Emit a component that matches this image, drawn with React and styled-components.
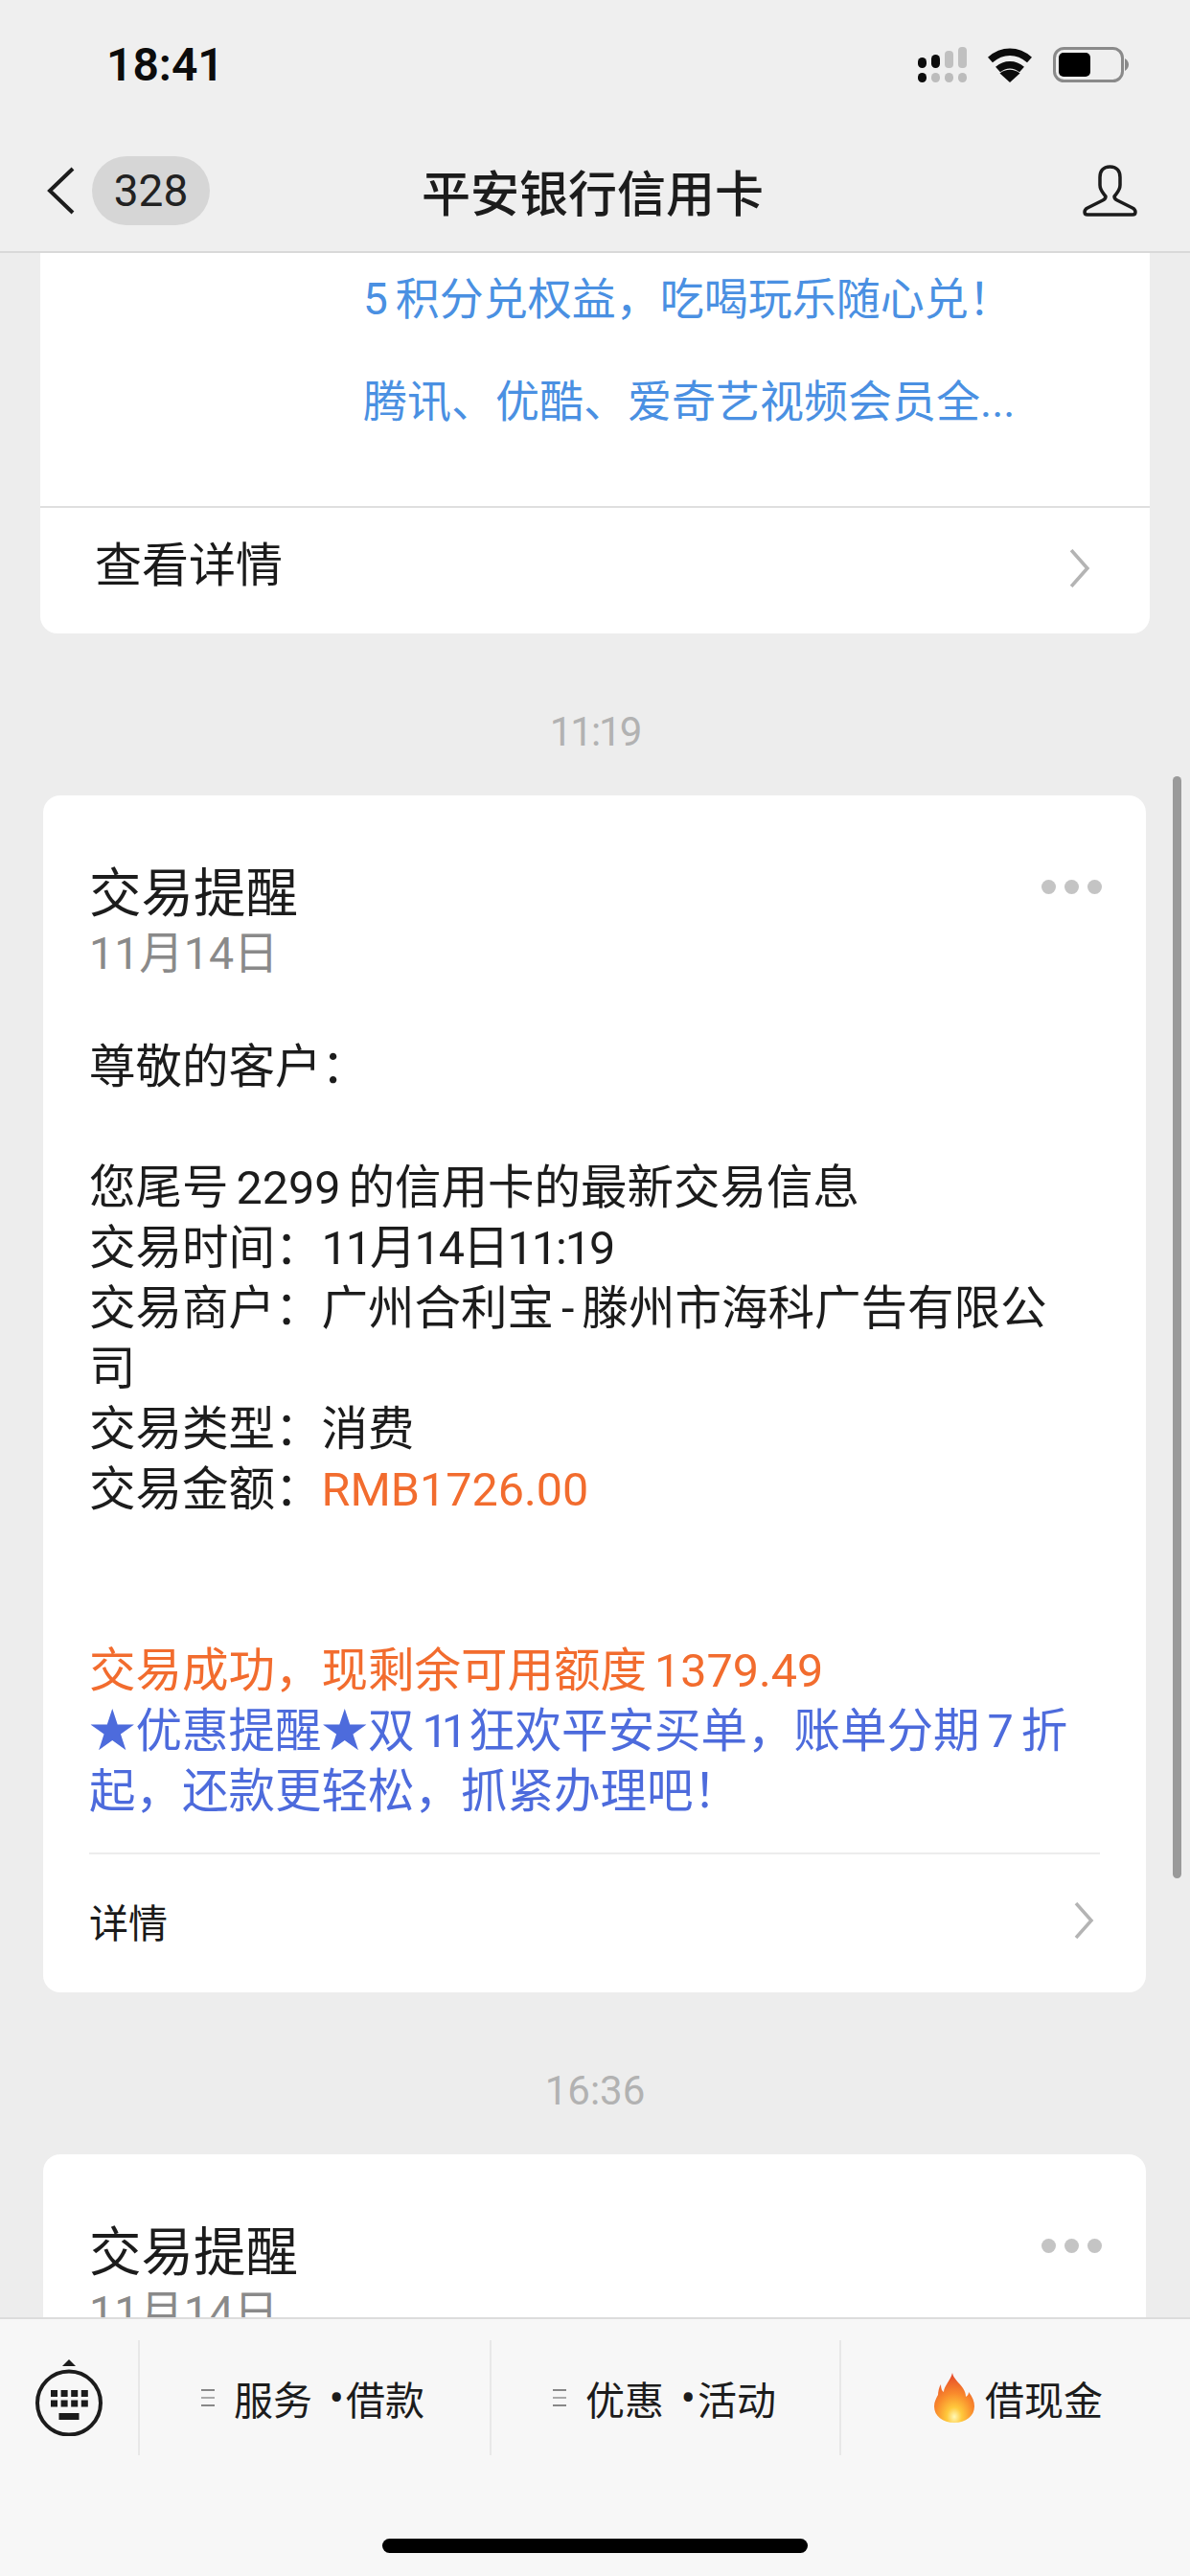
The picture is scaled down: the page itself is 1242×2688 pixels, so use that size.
import React from 'react';
import styled, { createGlobalStyle } from 'styled-components';

const GlobalStyle = createGlobalStyle`
  html, body { margin: 0; padding: 0; background: #ededed; }
  * { box-sizing: border-box; }
`;

// full-width punctuation, kept as escapes so it can't get swapped for the ascii ones
const COLON = '\uFF1A';
const COMMA = '\uFF0C';
const BANG = '\uFF01';

const Page = styled.div`
  width: 1242px;
  height: 2688px;
  display: flex;
  flex-direction: column;
  overflow: hidden;
  position: relative;
  background: #ededed;
  font-family: Roboto, "Noto Sans CJK SC", sans-serif;
  color: #1a1a1a;
`;
const Header = styled.header`
  height: 264px;
  flex: none;
  background: #efefef;
  border-bottom: 2px solid #d9d9d9;
`;
const StatusBar = styled.div`
  height: 135px;
  display: flex;
  align-items: flex-start;
  justify-content: space-between;
  padding: 49px 64px 0 111px;
`;
const Clock = styled.div`
  font-size: 48px;
  font-weight: 600;
  line-height: 38px;
  color: #0c0c0c;
`;
const StatusIcons = styled.div`
  display: flex;
  gap: 21px;
  align-items: center;
`;
const NavBar = styled.div`
  height: 127px;
  display: grid;
  grid-template-columns: 1fr auto 1fr;
  align-items: center;
  padding: 0 54px 0 49px;
`;
const NavLeft = styled.div`
  display: flex;
  align-items: center;
`;
const NavRight = styled.div`
  display: flex;
  justify-content: flex-end;
`;
const Badge = styled.div`
  width: 123px;
  height: 72px;
  margin-left: 18px;
  border-radius: 36px;
  background: #d6d6d6;
  font-size: 46px;
  line-height: 72px;
  text-align: center;
  color: #222;
`;
const NavTitle = styled.div`
  font-size: 51px;
  font-weight: 500;
  color: #1c1c1c;
`;
const Scroll = styled.main`
  flex: 1;
  min-height: 0;
  overflow: hidden;
`;
const PromoCard = styled.section`
  margin: 0 42px;
  height: 397px;
  background: #fff;
  border-radius: 0 0 18px 18px;
  display: flex;
  flex-direction: column;
`;
const PromoBody = styled.div`
  height: 266px;
  padding: 0 0 0 337px;
  border-bottom: 2px solid #dfdfdf;
`;
const PromoLine = styled.div`
  font-size: 46px;
  line-height: 107px;
  height: 107px;
  color: #4a90e2;
  white-space: nowrap;
  &:first-child { margin-top: -5px; }
`;
const PromoFoot = styled.div`
  flex: 1;
  display: flex;
  align-items: center;
  justify-content: space-between;
  padding: 0 62px 6px 57px;
  font-size: 49px;
  line-height: 60px;
`;
const FootLabel = styled.span`
  margin-top: -4px;
`;
const TimeStamp = styled.div`
  height: 169px;
  display: flex;
  align-items: center;
  justify-content: center;
  font-size: 42px;
  color: #b2b2b2;
  padding-top: 36px;
`;
const Card = styled.article`
  margin: 0 46px 0 45px;
  background: #fff;
  border-radius: 18px;
  padding: 71px 48px 0 48px;
  position: relative;
`;
const CardTitle = styled.div`
  font-size: 54.5px;
  line-height: 63px;
  color: #1c1c1c;
`;
const CardDate = styled.div`
  font-size: 46.5px;
  line-height: 63px;
  color: #8a8a8a;
`;
const Dots = styled.div`
  position: absolute;
  top: 88px;
  right: 46px;
  display: flex;
  gap: 9px;
`;
const Dot = styled.i`
  width: 15px;
  height: 15px;
  border-radius: 50%;
  background: #c4c4c4;
`;
const Body = styled.div`
  margin-top: 55px;
`;
const Line = styled.div`
  font-size: 48.5px;
  line-height: 63px;
  min-height: 63px;
  white-space: nowrap;
  color: ${p => p.$color || '#1c1c1c'};
`;
const Amount = styled.span`
  color: #f26c2e;
`;
const Gap = styled.span`
  display: inline-block;
  width: 8px;
`;
const Tight = styled.span`
  letter-spacing: ${p => p.$by}px;
`;
const CardFoot = styled.div`
  margin-top: 32px;
  height: 146px;
  border-top: 2px solid #ececec;
  display: flex;
  align-items: center;
  justify-content: space-between;
  font-size: 41px;
  padding: 0 6px 6px 0;
`;
const ScrollThumb = styled.div`
  position: absolute;
  top: 810px;
  left: 1224px;
  width: 9px;
  height: 1150px;
  border-radius: 5px;
  background: #9a9a9a;
`;
const BottomBar = styled.footer`
  height: 270px;
  flex: none;
  background: #f7f7f7;
  border-top: 2px solid #dcdcdc;
  display: flex;
  flex-direction: column;
`;
const Menu = styled.div`
  display: flex;
  margin-top: 22px;
  height: 120px;
`;
const KeyboardSlot = styled.div`
  width: 144px;
  flex: none;
  display: flex;
  align-items: flex-start;
  justify-content: center;
  padding: 20px 0 0;
`;
const MenuItem = styled.div`
  flex: none;
  width: ${p => p.$w}px;
  border-left: 2px solid #e8e8e8;
  display: flex;
  align-items: center;
  justify-content: center;
  font-size: 41px;
  color: #1c1c1c;
  padding-left: ${p => p.$pad || 0}px;
  padding-right: ${p => p.$padRight || 0}px;
`;
const GlyphBox = styled.span`
  display: flex;
  margin-right: ${p => p.$gap}px;
`;
const Bullet = styled.span`
  width: 35px;
  text-align: right;
  padding-right: 2px;
  font-size: 46px;
  line-height: 40px;
`;
const HomeIndicator = styled.div`
  width: 444px;
  height: 15px;
  border-radius: 8px;
  background: #000;
  margin: 87px auto 0;
`;

const Signal = () => (
  <svg width="51" height="37" viewBox="0 0 51 37">
    <rect x="0" y="11" width="9" height="11" rx="4.5" fill="#0c0c0c" />
    <rect x="14" y="8" width="9" height="14" rx="4.5" fill="#0c0c0c" />
    <rect x="28" y="4" width="9" height="18" rx="4" fill="#c0c0c0" />
    <rect x="42" y="0" width="9" height="22" rx="4" fill="#c0c0c0" />
    <rect x="0" y="27" width="9" height="10" rx="4.5" fill="#0c0c0c" />
    <rect x="14" y="27" width="9" height="10" rx="4.5" fill="#bcbcbc" />
    <rect x="28" y="27" width="9" height="10" rx="4.5" fill="#bcbcbc" />
    <rect x="42" y="27" width="9" height="10" rx="4.5" fill="#bcbcbc" />
  </svg>
);

const Wifi = () => (
  <svg width="48" height="36" viewBox="0 0 48 36">
    <path d="M3.500 12.500C16 1.500 32 1.500 44.500 12.500" fill="none" stroke="#0c0c0c" strokeWidth="7.500" />
    <path d="M11.500 22.500C19 16 29 16 36.500 22.500" fill="none" stroke="#0c0c0c" strokeWidth="7.500" />
    <path d="M24 36l-10.500-9.500c6-5 15-5 21 0z" fill="#0c0c0c" />
  </svg>
);

const Battery = () => (
  <svg width="79" height="37" viewBox="0 0 79 37">
    <rect x="1.500" y="1.500" width="71" height="34" rx="10" fill="none" stroke="#8a8a8a" strokeWidth="3" />
    <rect x="6" y="6" width="33" height="25" rx="5" fill="#000" />
    <path d="M75 12c2.400 1.300 4 3.600 4 6.500s-1.600 5.200-4 6.500z" fill="#8a8a8a" />
  </svg>
);

const BackChevron = () => (
  <svg width="29" height="50" viewBox="0 0 29 50">
    <path d="M27 2 3 25l24 23" fill="none" stroke="#1c1c1c" strokeWidth="4" />
  </svg>
);

const Person = () => (
  <svg width="59" height="54" viewBox="0 0 59 54">
    <path
      d="M29.500 2C22 2 19 7 19 13v8c0 6 4 9 6 12 0 2-1 3-3 4L6 45c-4 2-4 7 0 7h47c4 0 4-5 0-7l-16-8c-2-1-3-2-3-4 2-3 6-6 6-12v-8C40 7 37 2 29.500 2z"
      fill="none"
      stroke="#1c1c1c"
      strokeWidth="3.500"
      strokeLinejoin="round"
    />
  </svg>
);

const Chevron = ({ h = 38, w = 21 }) => (
  <svg width={w} height={h} viewBox="0 0 21 38">
    <path d="M2 1l16 18L2 37" fill="none" stroke="#b4b4b4" strokeWidth="3.500" />
  </svg>
);

const Keyboard = () => (
  <svg width="70" height="80" viewBox="0 0 70 80">
    <path d="M35 0l7 7H28z" fill="#1c1c1c" />
    <circle cx="35" cy="45.500" r="33" fill="none" stroke="#1c1c1c" strokeWidth="4" />
    {[0, 1, 2, 3].map(i => (
      <React.Fragment key={i}>
        <rect x={16 + i * 10.6} y="32" width="7" height="7" fill="#1c1c1c" />
        <rect x={16 + i * 10.6} y="42.500" width="7" height="7" fill="#1c1c1c" />
      </React.Fragment>
    ))}
    <rect x="24.500" y="56" width="21" height="7" fill="#1c1c1c" />
  </svg>
);

const MenuGlyph = () => (
  <svg width="14" height="18" viewBox="0 0 14 18">
    <rect x="0" y="0" width="14" height="2" fill="#888" />
    <rect x="0" y="8" width="14" height="2" fill="#aaa" />
    <rect x="0" y="16" width="14" height="2" fill="#888" />
  </svg>
);

const Flame = () => (
  <svg width="42" height="52" viewBox="0 0 42 52">
    <defs>
      <radialGradient id="flameFill" cx="0.5" cy="0.88" r="0.85">
        <stop offset="0" stopColor="#fff8b8" />
        <stop offset="0.22" stopColor="#ffc93c" />
        <stop offset="0.55" stopColor="#f98b2c" />
        <stop offset="1" stopColor="#e5492a" />
      </radialGradient>
    </defs>
    <path
      d="M19 0c1 6 7 10 11 16 2 3 3 6 3 9 2-1 3-3 3-5 4 5 6 10 6 15 0 10-9 17-21 17S0 45 0 35c0-5 2-8 4-12 0-3 1-8 3-11 0 4 1 7 3 8 0-6 7-12 9-20z"
      fill="url(#flameFill)"
    />
  </svg>
);

const bodyLines = [
  { text: `尊敬的客户${COLON}` },
  { text: '' },
  { parts: ['您尾号', '2299', '的信用卡的最新交易信息'] },
  { label: `交易时间${COLON}`, date: '11月14日11:19' },
  { parts: [`交易商户${COLON}广州合利宝`, '-', '滕州市海科广告有限公'] },
  { text: '司' },
  { text: `交易类型${COLON}消费` },
  { label: `交易金额${COLON}`, amount: 'RMB1726.00' },
  { text: '' },
  { text: '' },
  { parts: [`交易成功${COMMA}现剩余可用额度`, '1379.49'], color: '#f26c2e' },
  { parts: ['★优惠提醒★双', <Tight key="n" $by={-7}>11</Tight>, `狂欢平安买单${COMMA}账单分期`, '7', '折'], color: '#4d6bdc' },
  { text: `起${COMMA}还款更轻松${COMMA}抓紧办理吧${BANG}`, color: '#4d6bdc' },
];

const MessageCard = ({ children }) => (
  <Card>
    <Dots><Dot /><Dot /><Dot /></Dots>
    <CardTitle>交易提醒</CardTitle>
    <CardDate>11月14日</CardDate>
    {children}
  </Card>
);

export default function App() {
  return (
    <Page>
      <GlobalStyle />
      <Header>
        <StatusBar>
          <Clock>18:41</Clock>
          <StatusIcons>
            <Signal />
            <Wifi />
            <Battery />
          </StatusIcons>
        </StatusBar>
        <NavBar>
          <NavLeft>
            <BackChevron />
            <Badge>328</Badge>
          </NavLeft>
          <NavTitle>平安银行信用卡</NavTitle>
          <NavRight>
            <Person />
          </NavRight>
        </NavBar>
      </Header>

      <Scroll>
        <PromoCard>
          <PromoBody>
            <PromoLine>5<Gap />{`积分兑权益${COMMA}吃喝玩乐随心兑${BANG}`}</PromoLine>
            <PromoLine>腾讯、优酷、爱奇艺视频会员全...</PromoLine>
          </PromoBody>
          <PromoFoot>
            <FootLabel>查看详情</FootLabel>
            <Chevron h={40} w={22} />
          </PromoFoot>
        </PromoCard>

        <TimeStamp><Tight $by={-2}>11:19</Tight></TimeStamp>

        <MessageCard>
          <Body>
            {bodyLines.map((l, i) => (
              <Line key={i} $color={l.color}>
                {l.parts
                  ? l.parts.map((p, j) => (
                      <React.Fragment key={j}>
                        {j > 0 && <Gap />}
                        {p}
                      </React.Fragment>
                    ))
                  : l.text}
                {l.label}
                {l.date && <Tight $by={-2}>{l.date}</Tight>}
                {l.amount && <Amount>{l.amount}</Amount>}
              </Line>
            ))}
          </Body>
          <CardFoot>
            详情
            <Chevron />
          </CardFoot>
        </MessageCard>

        <TimeStamp>16:36</TimeStamp>

        <MessageCard />
      </Scroll>

      <ScrollThumb />

      <BottomBar>
        <Menu>
          <KeyboardSlot><Keyboard /></KeyboardSlot>
          <MenuItem $w={367} $padRight={4}>
            <GlyphBox $gap={20}><MenuGlyph /></GlyphBox>
            服务<Bullet>•</Bullet>借款
          </MenuItem>
          <MenuItem $w={365} $padRight={2}>
            <GlyphBox $gap={20}><MenuGlyph /></GlyphBox>
            优惠<Bullet>•</Bullet>活动
          </MenuItem>
          <MenuItem $w={366} $pad={6}>
            <GlyphBox $gap={11}><Flame /></GlyphBox>
            借现金
          </MenuItem>
        </Menu>
        <HomeIndicator />
      </BottomBar>
    </Page>
  );
}
